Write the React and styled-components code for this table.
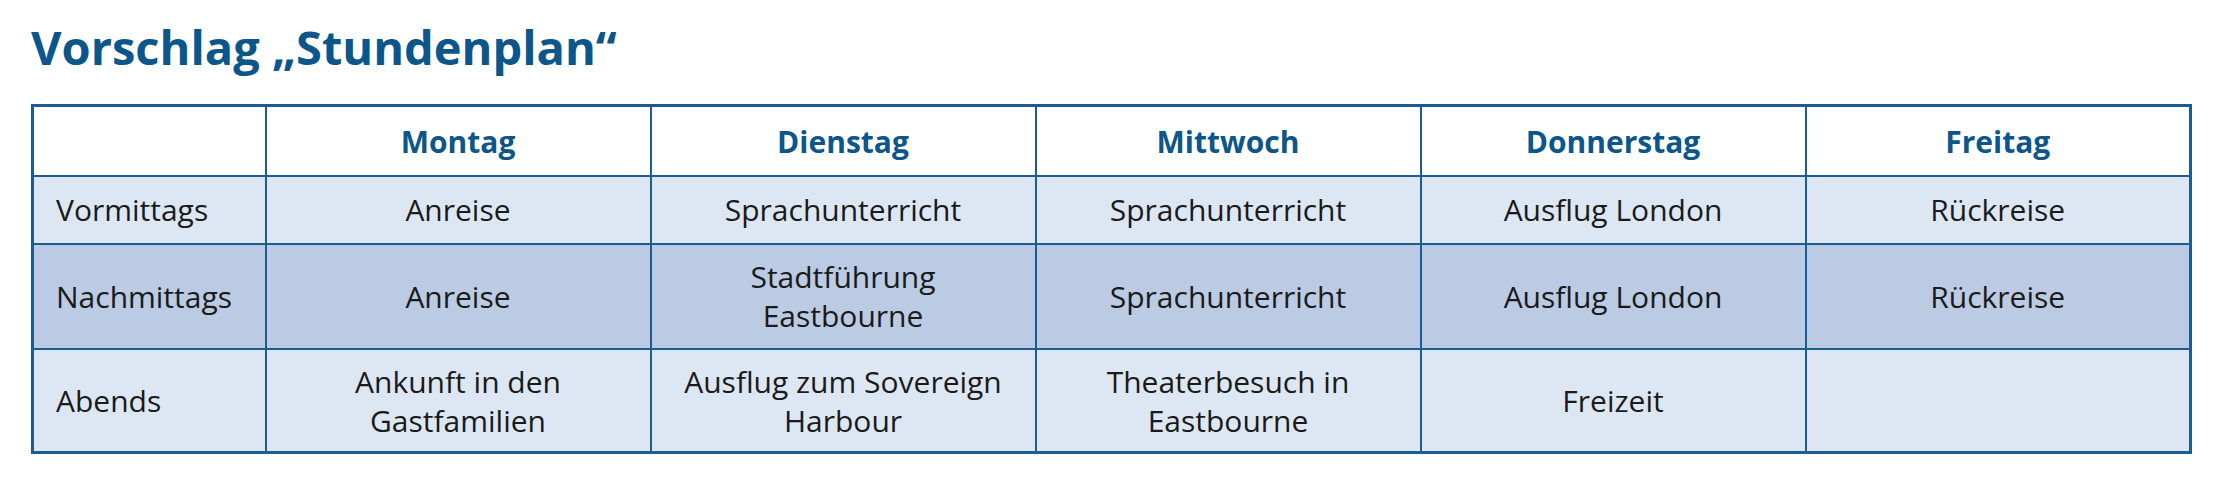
import React from "react";
import styled, { createGlobalStyle } from "styled-components";

const GlobalStyle = createGlobalStyle`
  html, body {
    margin: 0;
    padding: 0;
    background: #ffffff;
  }
  body {
    font-family: "Open Sans", "Liberation Sans", sans-serif;
    color: #1a1a1a;
  }
`;

const Page = styled.div`
  width: 2240px;
  height: 485px;
  padding: 19px 0 0 31px;
  box-sizing: border-box;
  overflow: hidden;
`;

const Title = styled.h1`
  margin: 0 0 29px;
  font-size: 47px;
  line-height: 1.2;
  font-weight: 700;
  color: #0d5689;
`;

const Table = styled.table`
  width: 2161px;
  border-collapse: collapse;
  table-layout: fixed;
  border: 3px solid #1c5d91;
`;

const Row = styled.tr`
  height: ${(p) => p.$height}px;
  background: ${(p) => p.$bg};
`;

const HeadCell = styled.th`
  border: 2.5px solid #1c5d91;
  font-size: 30px;
  font-weight: 700;
  color: #0d5689;
  text-align: center;
  vertical-align: middle;
  padding: 0 10px;
`;

const LabelCell = styled.td`
  border: 2.5px solid #1c5d91;
  font-size: 30px;
  font-weight: 400;
  text-align: left;
  padding: 0 0 0 22px;
  vertical-align: middle;
`;

const Cell = styled.td`
  border: 2.5px solid #1c5d91;
  font-size: 30px;
  line-height: 39px;
  font-weight: 400;
  text-align: center;
  vertical-align: middle;
  padding: 0 10px;
`;

const days = ["Montag", "Dienstag", "Mittwoch", "Donnerstag", "Freitag"];

const rows = [
  {
    label: "Vormittags",
    height: 68,
    bg: "#dde7f3",
    cells: [["Anreise"], ["Sprachunterricht"], ["Sprachunterricht"], ["Ausflug London"], ["Rückreise"]],
  },
  {
    label: "Nachmittags",
    height: 105,
    bg: "#bbcbe3",
    cells: [["Anreise"], ["Stadtführung", "Eastbourne"], ["Sprachunterricht"], ["Ausflug London"], ["Rückreise"]],
  },
  {
    label: "Abends",
    height: 104,
    bg: "#dde7f3",
    cells: [
      ["Ankunft in den", "Gastfamilien"],
      ["Ausflug zum Sovereign", "Harbour"],
      ["Theaterbesuch in", "Eastbourne"],
      ["Freizeit"],
      [],
    ],
  },
];

export default function App() {
  return (
    <Page>
      <GlobalStyle />
      <Title>Vorschlag „Stundenplan“</Title>
      <Table>
        <colgroup>
          <col style={{ width: 233 }} />
          {days.map((d) => (
            <col key={d} />
          ))}
        </colgroup>
        <thead>
          <Row $height={70} $bg="#ffffff">
            <HeadCell />
            {days.map((d) => (
              <HeadCell key={d}>{d}</HeadCell>
            ))}
          </Row>
        </thead>
        <tbody>
          {rows.map((r) => (
            <Row key={r.label} $height={r.height} $bg={r.bg}>
              <LabelCell>{r.label}</LabelCell>
              {r.cells.map((lines, i) => (
                <Cell key={i}>
                  {lines.map((l, j) => (
                    <React.Fragment key={j}>
                      {j > 0 && <br />}
                      {l}
                    </React.Fragment>
                  ))}
                </Cell>
              ))}
            </Row>
          ))}
        </tbody>
      </Table>
    </Page>
  );
}
